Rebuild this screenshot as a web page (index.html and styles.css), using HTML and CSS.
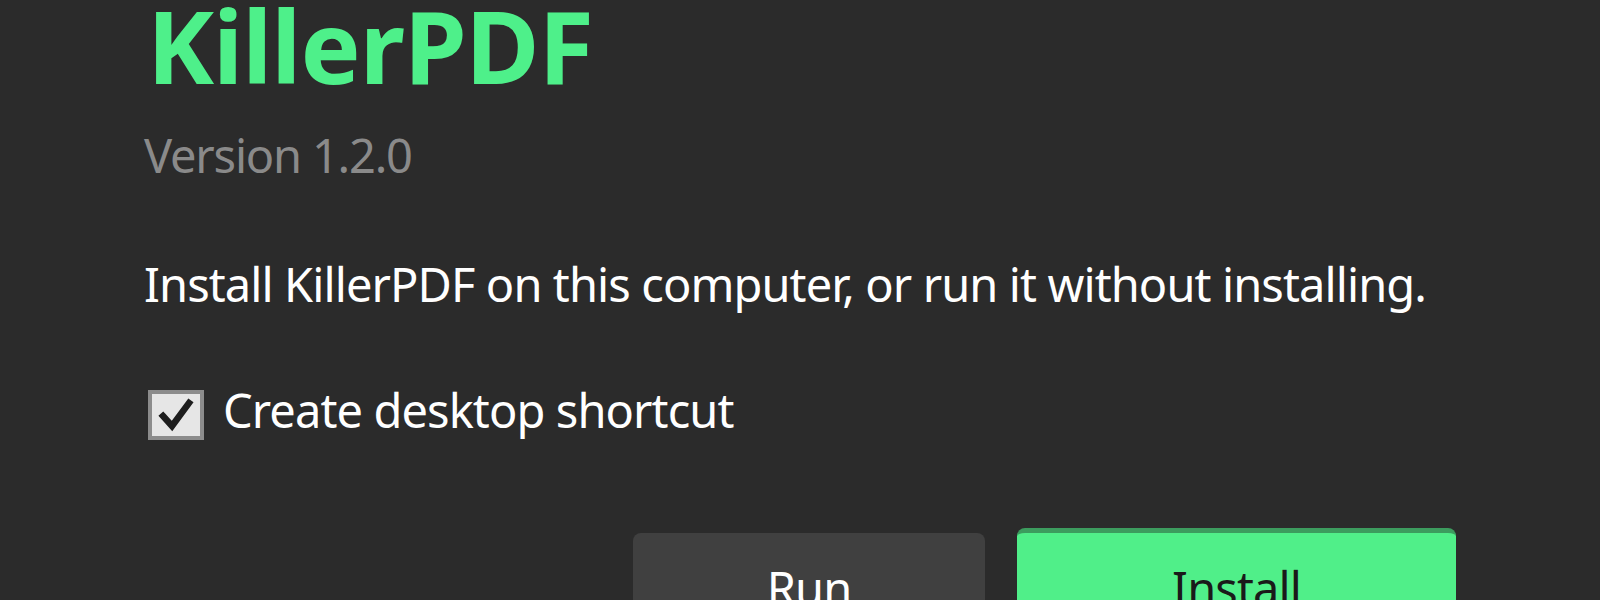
FILE: index.html
```html
<!DOCTYPE html>
<html lang="en">
<head>
<meta charset="utf-8">
<title>KillerPDF Setup</title>
<link rel="stylesheet" href="styles.css">
</head>
<body>
<main class="setup">
  <h1 class="title">KillerPDF</h1>
  <p class="version">Version 1.2.0</p>
  <p class="desc">Install KillerPDF on this computer, or run it without installing.</p>
  <label class="check">
    <span class="box">
      <svg viewBox="0 0 40 40" width="40" height="40" aria-hidden="true">
        <path d="M7 21 L16 31 L33 8" fill="none" stroke="#1e1e1e" stroke-width="6.5" stroke-linecap="square" stroke-linejoin="miter"/>
      </svg>
    </span>
    <span class="check-label">Create desktop shortcut</span>
  </label>
  <div class="actions">
    <button class="btn btn-run">Run</button>
    <button class="btn btn-install">Install</button>
  </div>
</main>
</body>
</html>
```
FILE: styles.css
```css
html, body {
  margin: 0;
  padding: 0;
  background: #2b2b2b;
  height: 100%;
  overflow: hidden;
}

.setup {
  padding: 0 144px 0 144px;
  font-family: "Noto Sans", "Open Sans", "DejaVu Sans", sans-serif;
  color: #ffffff;
}

.title {
  margin: 0;
  padding-left: 3px;
  font-size: 101px;
  line-height: 0.9;
  font-weight: 700;
  color: #4ef08a;
  letter-spacing: -1px;
}

.version {
  margin: 41px 0 0;
  font-size: 47px;
  line-height: 1;
  letter-spacing: -1.2px;
  color: #8a8a8a;
}

.desc {
  margin: 82px 0 0;
  font-size: 47px;
  line-height: 1;
  letter-spacing: -0.9px;
  color: #ffffff;
  white-space: nowrap;
}

.check {
  margin-top: 78px;
  display: flex;
  align-items: flex-start;
  gap: 19px;
  font-size: 47px;
  line-height: 1;
  letter-spacing: -0.9px;
}

.check-label {
  padding-top: 1px;
}

.box {
  width: 48px;
  height: 42px;
  margin: 4px 0 0 4px;
  border: 4px solid #8c8c8c;
  background: #e6e6e6;
  display: flex;
  align-items: center;
  justify-content: center;
  flex: none;
}

.box svg {
  display: block;
}

.actions {
  margin-top: 88px;
  display: flex;
  justify-content: flex-end;
  align-items: flex-start;
  gap: 32px;
}

.btn {
  font-family: inherit;
  font-size: 47px;
  line-height: 1;
  letter-spacing: -0.9px;
  border: none;
  border-radius: 8px;
  padding: 32px 0 40px;
  text-align: center;
}

.btn-run {
  width: 352px;
  margin-top: 5px;
  background: #404040;
  color: #ffffff;
}

.btn-install {
  width: 439px;
  background: #50ef89;
  border-top: 5px solid #3c9c5e;
  color: #1a1a1a;
}
```
